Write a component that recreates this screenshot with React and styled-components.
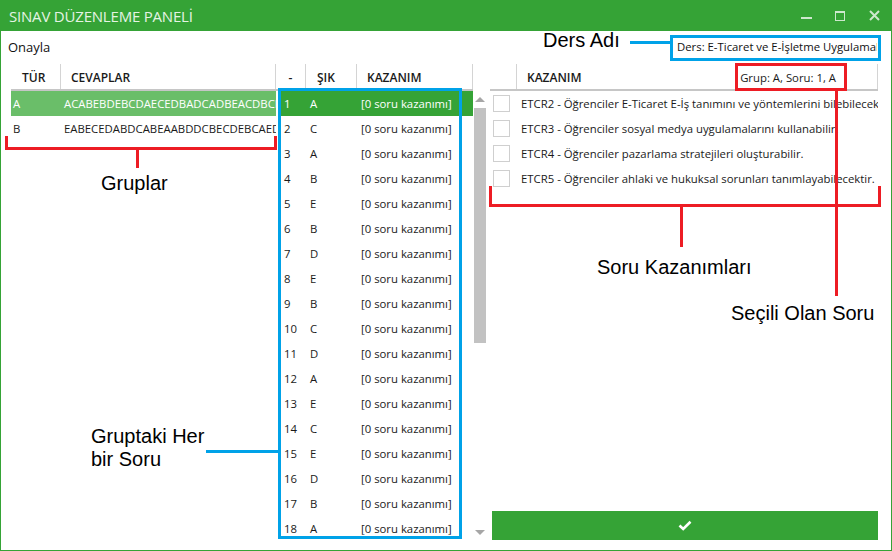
import React from "react";
import styled, { createGlobalStyle } from "styled-components";

const GREEN = "#35a336";
const LIGHT_GREEN = "#6abe69";
const RED = "#ed1c24";
const BLUE = "#00a2e8";
const UI_FONT = `"Open Sans", "Noto Sans", "DejaVu Sans", sans-serif`;
const TEXT_SIZE = "11.35px";

const Global = createGlobalStyle`
  html, body { margin: 0; padding: 0; background: #fff; overflow: hidden; }
  * { box-sizing: border-box; }
`;

const Window = styled.div`
  position: relative;
  width: 892px;
  height: 551px;
  border: 1px solid ${GREEN};
  border-top: 0;
  background: #fff;
  display: flex;
  flex-direction: column;
  font-family: ${UI_FONT};
  color: #1a1a1a;
  overflow: hidden;
`;

const TitleBar = styled.div`
  flex: none;
  height: 31px;
  background: ${GREEN};
  display: flex;
  align-items: center;
  padding-left: 8px;
`;

const Title = styled.div`
  font-size: 15px;
  color: #e4f3e4;
  letter-spacing: -0.2px;
`;

const Controls = styled.div`
  margin-left: auto;
  display: flex;
  height: 100%;
`;

const CtrlButton = styled.div`
  width: 34px;
  height: 100%;
  display: flex;
  align-items: center;
  justify-content: center;
  color: #cde8cd;
`;

const MenuBar = styled.div`
  flex: none;
  height: 33px;
  display: flex;
  align-items: center;
  padding: 0 14px 2px 7px;
`;

const MenuItem = styled.div`
  font-size: 13px;
  color: #111;
`;

const DersLabel = styled.div`
  margin-left: auto;
  width: 200px;
  font-size: ${TEXT_SIZE};
  white-space: nowrap;
  overflow: hidden;
  color: #111;
`;

const Content = styled.div`
  flex: 1;
  min-height: 0;
  display: grid;
  grid-template-columns: 265px 212px 390px;
  padding: 0 11px 9px 10px;
`;

const Panel = styled.div`
  display: flex;
  flex-direction: column;
  min-height: 0;
  overflow: hidden;
  margin-left: ${(p) => p.$offset || 0}px;
`;

const Header = styled.div`
  flex: none;
  height: 27px;
  display: flex;
  border-bottom: 2px solid #c6c6c6;
  margin-right: ${(p) => p.$trim || 0}px;
`;

const HeadCell = styled.div`
  flex: ${(p) => (p.$w ? "none" : "1")};
  width: ${(p) => (p.$w ? `${p.$w}px` : "auto")};
  display: flex;
  align-items: center;
  justify-content: ${(p) => (p.$center ? "center" : "flex-start")};
  padding-left: ${(p) => (p.$center ? 0 : p.$pad ?? 10)}px;
  padding-top: 1px;
  border-right: 1px solid #d4d4d4;
  font-size: 12px;
  font-weight: 600;
  color: #1a1a1a;
  white-space: nowrap;
`;

const GrupText = styled.span`
  margin-left: auto;
  margin-right: 41px;
  font-size: ${TEXT_SIZE};
  font-weight: 400;
`;

const Row = styled.div`
  flex: none;
  height: 25px;
  display: flex;
  align-items: center;
  font-size: ${TEXT_SIZE};
  white-space: nowrap;
  overflow: hidden;
  background: ${(p) => p.$bg || "transparent"};
  color: ${(p) => (p.$bg ? "#fff" : "#1a1a1a")};
  margin-left: ${(p) => p.$indent || 0}px;
  padding-left: ${(p) => p.$pad || 0}px;
`;

const Cell = styled.div`
  flex: ${(p) => (p.$w ? "none" : "1")};
  width: ${(p) => (p.$w ? `${p.$w}px` : "auto")};
  padding-left: ${(p) => p.$pad ?? 3}px;
  overflow: hidden;
  white-space: nowrap;
`;

const ListBody = styled.div`
  flex: 1;
  min-height: 0;
  display: grid;
  grid-template-columns: 197px 15px;
`;

const Rows = styled.div`
  min-height: 0;
  overflow: hidden;
  display: flex;
  flex-direction: column;
`;

const ScrollBar = styled.div`
  display: flex;
  flex-direction: column;
  align-items: center;
  padding-right: 2px;
`;

const ArrowBox = styled.div`
  flex: none;
  height: 17px;
  width: 100%;
  display: flex;
  align-items: center;
  justify-content: center;
  margin-top: ${(p) => (p.$down ? "auto" : 0)};
`;

const Arrow = styled.div`
  width: 0;
  height: 0;
  border-left: 5px solid transparent;
  border-right: 5px solid transparent;
  ${(p) =>
    p.$down
      ? "border-top: 5px solid #a6a6a6;"
      : "border-bottom: 5px solid #a6a6a6;"}
`;

const Thumb = styled.div`
  flex: none;
  width: 12px;
  height: 235px;
  background: #c2c2c2;
`;

const Check = styled.div`
  flex: none;
  width: 17px;
  height: 17px;
  border: 1px solid #cfcfcf;
  background: #fff;
  margin-right: 11px;
`;

const KazanimRows = styled.div`
  flex: 1;
  min-height: 0;
  overflow: hidden;
  display: flex;
  flex-direction: column;
`;

const ApproveButton = styled.div`
  flex: none;
  height: 29px;
  margin: 0 0 1px 2px;
  background: ${GREEN};
  display: flex;
  align-items: center;
  justify-content: center;
`;

/* ---------- annotations (drawn over the window) ---------- */

const Overlay = styled.div`
  position: absolute;
  inset: 0;
  pointer-events: none;
`;

const Bar = styled.div`
  position: absolute;
  left: ${(p) => p.$x}px;
  top: ${(p) => p.$y}px;
  width: ${(p) => p.$w}px;
  height: ${(p) => p.$h}px;
  background: ${(p) => p.$c};
`;

const Frame = styled.div`
  position: absolute;
  left: ${(p) => p.$x}px;
  top: ${(p) => p.$y}px;
  width: ${(p) => p.$w}px;
  height: ${(p) => p.$h}px;
  border: 3px solid ${(p) => p.$c};
`;

const Note = styled.div`
  position: absolute;
  left: ${(p) => p.$x}px;
  top: ${(p) => p.$y}px;
  font-family: "Liberation Sans", Arial, sans-serif;
  font-size: 20px;
  line-height: 23px;
  color: #000;
  white-space: pre;
`;

const answersA = "ACABEBDEBCDAECEDBADCADBEACDBCEAB";
const answersB = "EABECEDABDCABEAABDDCBECDEBCAEDBA";

const kazanimlar = [
  "ETCR2 - Öğrenciler E-Ticaret E-İş tanımını ve yöntemlerini bilebilecek.",
  "ETCR3 - Öğrenciler sosyal medya uygulamalarını kullanabilir.",
  "ETCR4 - Öğrenciler pazarlama stratejileri oluşturabilir.",
  "ETCR5 - Öğrenciler ahlaki ve hukuksal sorunları tanımlayabilecektir.",
];

export default function App() {
  return (
    <>
      <Global />
      <Window>
        <TitleBar>
          <Title>SINAV DÜZENLEME PANELİ</Title>
          <Controls>
            <CtrlButton>
              <svg width="11" height="11" viewBox="0 0 11 11">
                <rect x="0" y="7" width="11" height="2" fill="currentColor" />
              </svg>
            </CtrlButton>
            <CtrlButton>
              <svg width="10" height="10" viewBox="0 0 10 10">
                <rect x="0.5" y="0.5" width="9" height="9" fill="none" stroke="currentColor" strokeWidth="1" />
                <rect x="0" y="0" width="10" height="2" fill="currentColor" />
              </svg>
            </CtrlButton>
            <CtrlButton>
              <svg width="11" height="11" viewBox="0 0 11 11">
                <path d="M1 1 L10 10 M10 1 L1 10" stroke="currentColor" strokeWidth="2" />
              </svg>
            </CtrlButton>
          </Controls>
        </TitleBar>

        <MenuBar>
          <MenuItem>Onayla</MenuItem>
          <DersLabel>Ders: E-Ticaret ve E-İşletme Uygulamaları</DersLabel>
        </MenuBar>

        <Content>
          {/* Gruplar */}
          <Panel>
            <Header>
              <HeadCell $w={50} $pad={11}>TÜR</HeadCell>
              <HeadCell $pad={10}>CEVAPLAR</HeadCell>
            </Header>
            <Row $bg={LIGHT_GREEN}>
              <Cell $w={50} $pad={2}>A</Cell>
              <Cell $pad={3}>{answersA}</Cell>
            </Row>
            <Row>
              <Cell $w={50} $pad={2}>B</Cell>
              <Cell $pad={3}>{answersB}</Cell>
            </Row>
          </Panel>

          {/* Sorular */}
          <Panel>
            <Header $trim={15}>
              <HeadCell $w={30} $center>-</HeadCell>
              <HeadCell $w={51} $pad={11}>ŞIK</HeadCell>
              <HeadCell $pad={10}>KAZANIM</HeadCell>
            </Header>
            <ListBody>
              <Rows>
                {answersA.split("").map((c, i) => (
                  <Row key={i} $indent={5} $bg={i === 0 ? GREEN : undefined}>
                    <Cell $w={25} $pad={3}>{i + 1}</Cell>
                    <Cell $w={51} $pad={4}>{c}</Cell>
                    <Cell $pad={4}>[0 soru kazanımı]</Cell>
                  </Row>
                ))}
              </Rows>
              <ScrollBar>
                <ArrowBox>
                  <Arrow />
                </ArrowBox>
                <Thumb />
                <ArrowBox $down>
                  <Arrow $down />
                </ArrowBox>
              </ScrollBar>
            </ListBody>
          </Panel>

          {/* Kazanımlar */}
          <Panel $offset={2}>
            <Header>
              <HeadCell $w={27} />
              <HeadCell $pad={10}>
                KAZANIM
                <GrupText>Grup: A, Soru: 1, A</GrupText>
              </HeadCell>
            </Header>
            <KazanimRows>
              {kazanimlar.map((k) => (
                <Row key={k} $pad={3}>
                  <Check />
                  {k}
                </Row>
              ))}
            </KazanimRows>
            <ApproveButton>
              <svg width="14" height="11" viewBox="0 0 14 11">
                <path d="M1.5 5.5 L5.2 9 L12.5 1.8" fill="none" stroke="#fff" strokeWidth="2.6" />
              </svg>
            </ApproveButton>
          </Panel>
        </Content>

        <Overlay>
          {/* Ders Adı */}
          <Note $x={542} $y={29}>Ders Adı</Note>
          <Bar $c={BLUE} $x={629} $y={41} $w={40} $h={3} />
          <Frame $c={BLUE} $x={669} $y={35} $w={211} $h={26} />

          {/* Seçili Olan Soru */}
          <Frame $c={RED} $x={734} $y={63} $w={112} $h={28} />
          <Bar $c={RED} $x={834} $y={91} $w={3} $h={205} />
          <Note $x={730} $y={302}>Seçili Olan Soru</Note>

          {/* Soru Kazanımları */}
          <Bar $c={RED} $x={488} $y={186} $w={3} $h={21} />
          <Bar $c={RED} $x={877} $y={186} $w={3} $h={21} />
          <Bar $c={RED} $x={488} $y={204} $w={392} $h={3} />
          <Bar $c={RED} $x={679} $y={207} $w={3} $h={40} />
          <Note $x={596} $y={256}>Soru Kazanımları</Note>

          {/* Gruplar */}
          <Bar $c={RED} $x={4} $y={136} $w={3} $h={14} />
          <Bar $c={RED} $x={273} $y={136} $w={3} $h={14} />
          <Bar $c={RED} $x={4} $y={147} $w={272} $h={3} />
          <Bar $c={RED} $x={135} $y={150} $w={3} $h={18} />
          <Note $x={100} $y={172}>Gruplar</Note>

          {/* Gruptaki Her bir Soru */}
          <Frame $c={BLUE} $x={277} $y={88} $w={184} $h={451} />
          <Bar $c={BLUE} $x={205} $y={450} $w={72} $h={3} />
          <Note $x={90} $y={425}>{"Gruptaki Her\nbir Soru"}</Note>
        </Overlay>
      </Window>
    </>
  );
}
